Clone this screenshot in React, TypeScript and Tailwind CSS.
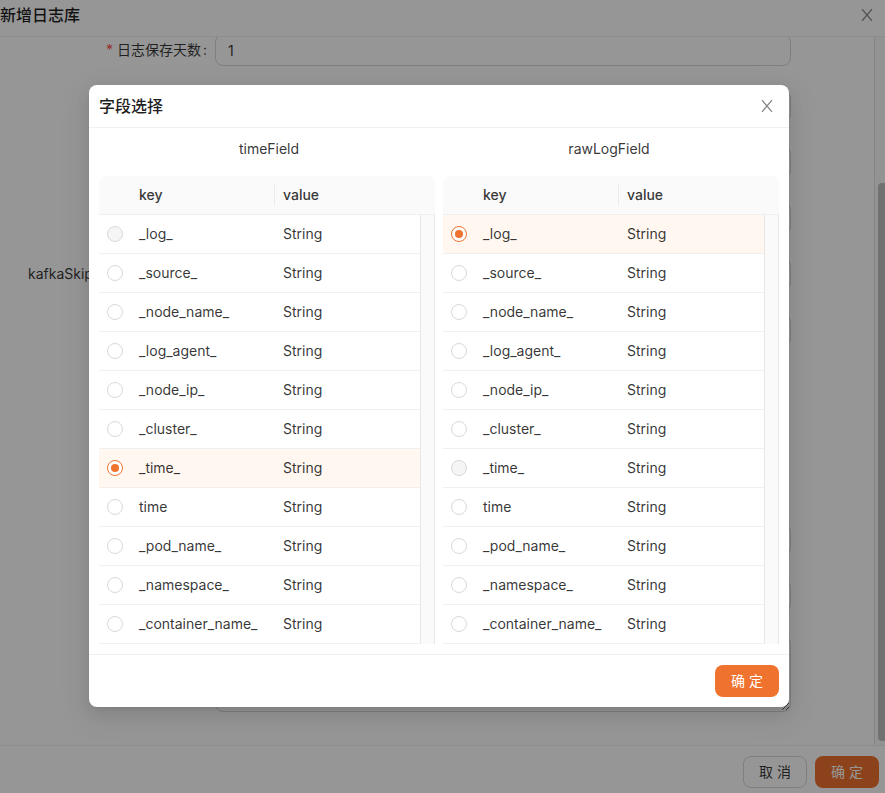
import { ReactNode } from 'react';

const FIELDS = [
  '_log_',
  '_source_',
  '_node_name_',
  '_log_agent_',
  '_node_ip_',
  '_cluster_',
  '_time_',
  'time',
  '_pod_name_',
  '_namespace_',
  '_container_name_',
];

const inputClass =
  'block h-8 w-full rounded-lg border border-[#d9d9d9] bg-white px-3 text-sm text-black/80 outline-none';

function CloseButton({ label }: { label: string }) {
  return (
    <button type="button" aria-label={label} className="flex size-[22px] items-center justify-center text-[#858585]">
      <svg viewBox="0 0 12 12" className="size-3" fill="none" stroke="currentColor" strokeWidth="1.3">
        <path d="M1 0.2 11 11.8M11 0.2 1 11.8" />
      </svg>
    </button>
  );
}

function PrimaryButton({ children }: { children: ReactNode }) {
  return (
    <button type="button" className="h-8 w-16 rounded-lg bg-[#ef732e] text-sm text-white">
      {children}
    </button>
  );
}

function FormRow({ id, label, required, children }: { id: string; label?: string; required?: boolean; children?: ReactNode }) {
  return (
    <div className="flex min-h-8">
      <label htmlFor={id} className="flex h-8 w-[215px] shrink-0 items-center justify-end pr-2 text-sm whitespace-nowrap">
        {required && <span className="mr-1 text-[#ff4d4f]">*</span>}
        {label}
        {label && <span className="ml-0.5">:</span>}
      </label>
      <div className="min-w-0 flex-1">{children}</div>
    </div>
  );
}

function FieldTable({ name, selected, disabled }: { name: string; selected: string; disabled: string }) {
  return (
    <table
      aria-labelledby={name}
      className="min-w-0 flex-1 table-fixed border-separate border-spacing-0 text-left text-sm leading-[22px]"
    >
      <colgroup>
        <col className="w-8" />
        <col className="w-36" />
        <col />
        <col className="w-[15px]" />
      </colgroup>
      <thead>
        <tr className="h-[39px]">
          <td className="rounded-tl-lg border-b border-[#f0f0f0] bg-[#fafafa]" />
          <th scope="col" className="border-b border-[#f0f0f0] bg-[#fafafa] p-0 font-medium">
            <div className="border-r border-[#ececec] pl-2">key</div>
          </th>
          <th scope="col" className="border-b border-[#f0f0f0] bg-[#fafafa] px-2 py-0 font-medium">
            value
          </th>
          <td className="rounded-tr-lg border-b border-[#f0f0f0] bg-[#fafafa]" />
        </tr>
      </thead>
      <tbody>
        {FIELDS.map((field, i) => {
          const cell =
            field === selected
              ? 'border-b border-[#f5efea] bg-[#fff7f0] px-2 py-0'
              : 'border-b border-[#f0f0f0] px-2 py-0';
          return (
            <tr key={field} className="h-[39px]">
              <td className={cell}>
                <input
                  type="radio"
                  name={name}
                  aria-label={field}
                  defaultChecked={field === selected}
                  disabled={field === disabled}
                  className="flex size-4 appearance-none items-center justify-center rounded-full border border-[#d9d9d9] bg-white before:size-2 before:rounded-full checked:border-[#ef732e] checked:before:bg-[#ef732e] disabled:bg-[#f5f5f5]"
                />
              </td>
              <td className={cell}>{field}</td>
              <td className={cell}>String</td>
              {i === 0 && <td rowSpan={FIELDS.length} className="border-x border-x-[#e8e8e8] bg-[#fafafa] p-0" />}
            </tr>
          );
        })}
      </tbody>
    </table>
  );
}

export default function App() {
  return (
    <div className="relative flex h-screen flex-col overflow-hidden bg-white font-[Inter,'Noto_Sans_CJK_SC',sans-serif] text-black/80">
      <header className="flex h-[37px] shrink-0 items-center justify-between border-b border-[#f0f0f0] pr-[7px] pb-[6px]">
        <h1 className="text-base font-medium text-black/88">新增日志库</h1>
        <CloseButton label="关闭" />
      </header>

      <div className="flex min-h-0 flex-1">
        <div className="min-w-0 flex-1 overflow-hidden">
          <form className="-mt-[3px] flex flex-col gap-6 pr-[83px]">
            <FormRow id="days" label="日志保存天数" required>
              <input id="days" defaultValue="1" className={inputClass} />
            </FormRow>
            <FormRow id="f2"><input id="f2" className={inputClass} /></FormRow>
            <FormRow id="f3"><input id="f3" className={inputClass} /></FormRow>
            <FormRow id="f4"><input id="f4" className={inputClass} /></FormRow>
            <div className="flex">
              <label htmlFor="skip" className="flex h-8 w-[215px] shrink-0 items-center pl-7 text-sm">kafkaSkip</label>
              <input id="skip" className={inputClass} />
            </div>
            <FormRow id="f6"><input id="f6" className={inputClass} /></FormRow>
            <div className="h-[130px]" />
            <FormRow id="f7"><input id="f7" className={inputClass} /></FormRow>
            <FormRow id="f8"><input id="f8" className={inputClass} /></FormRow>
            <FormRow id="f9">
              <textarea id="f9" className="block h-[76px] w-full rounded-lg border border-[#d9d9d9] bg-white outline-none" />
            </FormRow>
          </form>
        </div>
        <div className="flex w-[11px] flex-col border-l border-[#e0e0e0] bg-[#fafafa] pt-[146px] pb-1 pl-[3px]">
          <div className="flex-1 rounded-l bg-[#c1c1c1]" />
        </div>
      </div>

      <footer className="flex shrink-0 justify-end gap-2 border-t border-[#f0f0f0] pt-[10px] pr-[6px] pb-[5px]">
        <button type="button" className="h-8 w-16 rounded-lg border border-[#d9d9d9] bg-white text-sm">取 消</button>
        <PrimaryButton>确 定</PrimaryButton>
      </footer>

      <div className="absolute inset-0 flex items-start justify-center bg-black/41 pt-[85px] pr-[7px]">
        <div
          role="dialog"
          aria-label="字段选择"
          className="w-[700px] rounded-lg bg-white shadow-[0_6px_16px_rgba(0,0,0,0.08),0_3px_6px_-4px_rgba(0,0,0,0.12),0_9px_28px_8px_rgba(0,0,0,0.05)]"
        >
          <div className="flex h-[43px] items-center justify-between border-b border-[#f0f0f0] pr-[11px] pl-[10px]">
            <h2 className="text-base font-medium text-black/88">字段选择</h2>
            <CloseButton label="关闭" />
          </div>
          <div className="p-[10px]">
            <div className="mb-4 grid grid-cols-2 text-center text-sm leading-[22px]">
              <h3 id="timeField">timeField</h3>
              <h3 id="rawLogField">rawLogField</h3>
            </div>
            <div className="flex gap-2">
              <FieldTable name="timeField" selected="_time_" disabled="_log_" />
              <FieldTable name="rawLogField" selected="_log_" disabled="_time_" />
            </div>
          </div>
          <div className="flex justify-end border-t border-[#f0f0f0] p-[10px]">
            <PrimaryButton>确 定</PrimaryButton>
          </div>
        </div>
      </div>
    </div>
  );
}
